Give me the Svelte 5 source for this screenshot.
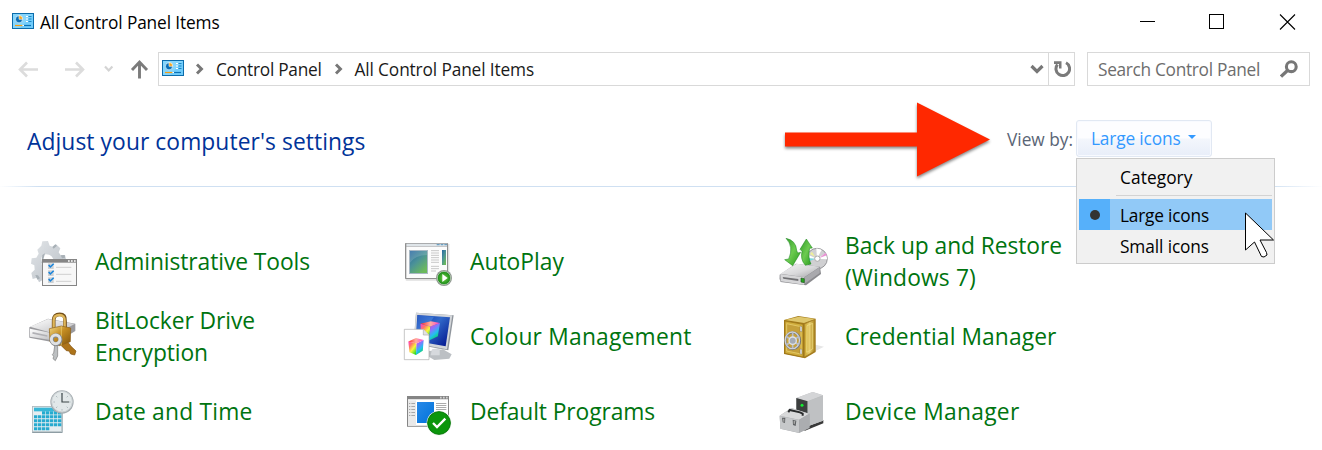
<script>
  const items = [
    { icon: 'tools', lines: [['Administrative Tools', 215]] },
    { icon: 'autoplay', lines: [['AutoPlay', 94]] },
    { icon: 'backup', lines: [['Back up and Restore', 217], ['(Windows 7)', 131]] },
    { icon: 'bitlocker', lines: [['BitLocker Drive', 160], ['Encryption', 113]] },
    { icon: 'colour', lines: [['Colour Management', 221.5]] },
    { icon: 'credential', lines: [['Credential Manager', 211.5]] },
    { icon: 'date', lines: [['Date and Time', 157.5]] },
    { icon: 'programs', lines: [['Default Programs', 185]] },
    { icon: 'device', lines: [['Device Manager', 174.5]] }
  ];

  // Spreads the letters so that a label takes up the given width.
  function fit(node, width) {
    const spacing = (width - node.getBoundingClientRect().width) / node.textContent.length;
    node.style.letterSpacing = `${spacing.toFixed(3)}px`;
  }
</script>

{#snippet panelIcon()}
  <svg class="panel-icon" viewBox="0 0 22 16">
    <rect width="22" height="16" fill="#0c6cab" />
    <rect x="1" y="1" width="20" height="14" fill="#70ccfb" />
    <path d="M1 1h20L8 15H1z" fill="#86d5fb" />
    <circle cx="7" cy="6.3" r="3.6" fill="#0a6fb7" stroke="#e5f6ff" stroke-width=".7" />
    <path d="M7 6.3V2.5a3.8 3.8 0 0 1 3.8 3.8z" fill="#f7a51c" stroke="#fff" stroke-width=".6" />
    <path d="M14 3.5h2m-2 2.500h2m-2 2.500h2" stroke="#fff" stroke-width="1.200" />
    <path d="M16.500 3.500h3m-3 2.500h3m-3 2.500h3" stroke="#1c86c6" stroke-width="1.100" />
    <path d="M3 12.500h7.500" stroke="#f59d12" stroke-width="1.200" />
    <path d="M10.500 12.500h1.500" stroke="#fff" stroke-width="1.200" />
    <path d="M12 12.500h7" stroke="#0c72b5" stroke-width="1.200" />
  </svg>
{/snippet}

{#snippet chevron()}
  <svg class="chevron" viewBox="0 0 10 12"><path d="M2 1.500 6.500 6 2 10.500" fill="none" stroke="#777" stroke-width="2.900" /></svg>
{/snippet}

<main>
  <header class="titlebar">
    {@render panelIcon()}
    <span class="title" use:fit={179.5}>All Control Panel Items</span>
    <svg class="controls" viewBox="0 0 156 16" shape-rendering="crispEdges">
      <path d="M0 7.500h15M69.500.500h14v14h-14z" fill="none" stroke="#000" />
      <path d="m140 .500 15 15m0-15-15 15" fill="none" stroke="#000" shape-rendering="auto" stroke-width="1.100" />
    </svg>
  </header>

  <nav>
    <svg class="arrows" viewBox="0 0 158 34" fill="none">
      <path d="M38 17.500H21M27 10.500l-7 7 7 7M65 17.500h17M76 10.500l7 7-7 7" stroke="#dcdcdc" stroke-width="2.600" />
      <path d="m105 14.500 3.700 4 3.700-4" stroke="#d4d4d4" stroke-width="2.200" />
      <path d="M139.500 26.500V10M132 18l7.500-8 7.500 8" stroke="#7b7b7b" stroke-width="2.900" />
    </svg>
    <div class="address">
      {@render panelIcon()}
      {@render chevron()}
      <span class="crumb" use:fit={105.5}>Control Panel</span>
      {@render chevron()}
      <span class="crumb" use:fit={179.5}>All Control Panel Items</span>
      <svg class="expand" viewBox="0 0 14 10"><path d="m1.500 2 5.500 5.500L12.500 2" fill="none" stroke="#777" stroke-width="3.200" /></svg>
      <div class="refresh">
        <svg viewBox="0 0 18 18"><path d="M13 2.800A6.800 6.800 0 1 1 4.500 4.500" fill="none" stroke="#7a7a7a" stroke-width="3" /><path d="M1 1.200h7.500v7.300H6V4H1z" fill="#7a7a7a" /></svg>
      </div>
    </div>
    <div class="search">
      <span use:fit={162}>Search Control Panel</span>
      <svg viewBox="0 0 18 18" fill="none" stroke="#777"><circle cx="11.300" cy="6.700" r="4.900" stroke-width="3.100" /><path d="m7.500 10.500-6.500 6" stroke-width="3.300" /></svg>
    </div>
  </nav>

  <section class="heading">
    <h1><span use:fit={338.5}>Adjust your computer's settings</span></h1>
    <svg class="pointer" viewBox="0 0 220 92"><path d="M4 39.500h132V9.500l73 37-73 37v-30H4z" fill="#ff2800" /></svg>
    <div class="view-label"><span use:fit={66}>View by:</span></div>
    <div class="view">
      <button><span use:fit={89.5}>Large icons</span><i></i></button>
      <div class="menu">
        <div class="option"><span use:fit={72.5}>Category</span></div>
        <hr />
        <div class="option selected"><b></b><span use:fit={89}>Large icons</span></div>
        <div class="option"><span use:fit={89}>Small icons</span></div>
        <svg class="cursor" viewBox="0 0 30 46"><path d="M.5 1v37l9-8 7 14.500 2.500.500 3-2-.500-2.500L15 28h13.500z" fill="#fff" stroke="#000" /></svg>
      </div>
    </div>
  </section>

  <section class="grid">
    {#each items as item}
      <div class="item">
        <svg class="icon" viewBox="0 0 210 210">
          {#if item.icon === 'tools'}
            <defs><linearGradient id="gear" x2="1" y2="1"><stop stop-color="#e2e5e8" /><stop offset="1" stop-color="#b6bdc4" /></linearGradient></defs>
            <path fill-rule="evenodd" d="m64 47 3-13 17-1 5 14 9 3 10-7 13 12-5 12 6 9 13-1 4 18-13 8-2 12-67 44-6-14-13 4-4-18 10-10-1-13-10-5 2-16 14-2 7-12-4-12zM78 73q-16 3-15 21 1 17 16 18 18 0 22-15 0-23-23-24z" fill="url(#gear)" />
            <path d="m67 75 8-5-6 22 2 15-7-8zM97 51l9-8 5 4-10 9zM122 76l12-1 1 8-9 2zM46 135l8 1 6 9-8 4z" fill="#a8b0b6" />
            <rect x="66" y="87" width="105" height="81" fill="#858585" /><rect x="69" y="98" width="99" height="67" fill="#f7f7f7" />
            <path d="M144 93h5m4 0h5m4 0h5" stroke="#fff" stroke-width="5" />
            <path d="M108 112h46M108 133h46M108 154h46" stroke="#bbb" stroke-width="2" />
            {#each [99, 120, 141] as y}<rect x="84" y={y + 1} width="17" height="17" fill="#ccd0d3" /><path d="m86 {y + 6} 5 6 10-10" fill="none" stroke="#1683dc" stroke-width="4.500" />{/each}
          {:else if item.icon === 'autoplay'}
            <defs><linearGradient id="screen" x2=".7" y2="1"><stop stop-color="#2767a0" /><stop offset=".5" stop-color="#4b9298" /><stop offset="1" stop-color="#6cba5b" /></linearGradient><radialGradient id="play"><stop stop-color="#73d546" /><stop offset="1" stop-color="#168717" /></radialGradient></defs>
            <rect x="32" y="41" width="131" height="111" rx="2" fill="#ccc" opacity=".6" /><rect x="30" y="39" width="129" height="108" rx="2" fill="#909090" />
            <rect x="34" y="41" width="122" height="8" fill="#dfe5e9" /><path d="M125 44h9m3 0h8m3 0h8" stroke="#6ca0c2" stroke-width="4" />
            <rect x="34" y="50" width="122" height="94" fill="#fcfcfc" /><rect x="42" y="60" width="57" height="72" fill="#a8b8c4" /><rect x="45" y="63" width="51" height="66" fill="url(#screen)" />
            <path d="M45 63h51v12Q61 75 45 98z" fill="#fff" opacity=".15" /><rect x="141" y="60" width="12" height="45" fill="url(#screen)" />
            <path d="M108 62h24m-24 7h24m-24 7h24m-24 7h24m-24 7h24m-24 7h24m-24 12h24m-24 7h24m-24 7h15" stroke="#c8c8c8" stroke-width="3" />
            <circle cx="147" cy="144" r="24" fill="#8f9790" /><circle cx="147" cy="144" r="20" fill="url(#play)" stroke="#d2ddcd" stroke-width="2" /><path d="m142 132 16 12-16 12z" fill="#fff" />
          {:else if item.icon === 'backup'}
            <defs><linearGradient id="drive" x2="1" y2="1"><stop stop-color="#f7f7f8" /><stop offset=".55" stop-color="#d8d8da" /><stop offset="1" stop-color="#a0a0a4" /></linearGradient><linearGradient id="green" x2="1" y2="1"><stop stop-color="#2f9a25" /><stop offset=".5" stop-color="#6ccb50" /><stop offset="1" stop-color="#26981c" /></linearGradient></defs>
            <circle cx="141" cy="86" r="31" fill="#d0d0d2" stroke="#858589" stroke-width="2.500" /><path d="m141 86 26-16 5 18zM141 86l-24-10-6 10zM141 86l-2-31 16 4z" fill="#fff" /><path d="m148 84 19-16 4 8z" fill="#e993d4" /><path d="m135 86-22-2 2 11z" fill="#78d9dd" /><path d="m135 80-15-8 6-7z" fill="#eff099" /><circle cx="142" cy="86" r="8" fill="#fff" stroke="#aaa" stroke-width="3" />
            <path d="m29 134 49-33 72 9 3 22-45 34-76-10q-5-9-3-22z" fill="#8a8a8e" /><path d="m31 131 49-30 70 9-47 32z" fill="url(#drive)" /><path d="m31 132 71 10v22l-70-10z" fill="#d6d6d8" /><path d="m102 143 47-31v17l-43 31-4 4z" fill="#a9a9ad" /><path d="m38 141 47 6v6l-45-7z" fill="#717174" /><path d="m93 144 10 2v12l-10-2z" fill="#25a51d" stroke="#265525" stroke-width="2" />
            <path d="M48 25q30 6 32 36l3 8 9-2-24 40-24-18 12-2q16-37-8-62z" fill="url(#green)" stroke="#16831a" stroke-width="1.500" /><path d="m90 58 19-31 18 27-8 1q-6 28 4 47l-17 4Q90 88 96 64z" fill="url(#green)" stroke="#16831a" stroke-width="1.500" />
          {:else if item.icon === 'bitlocker'}
            <defs><linearGradient id="disk" x2="1" y2="1"><stop stop-color="#fff" /><stop offset="1" stop-color="#b9b9bc" /></linearGradient><linearGradient id="gold" x2="1" y2="1"><stop stop-color="#f2d988" /><stop offset=".45" stop-color="#c48d22" /><stop offset="1" stop-color="#81540c" /></linearGradient></defs>
            <path d="m28 67 56-26 82 15v22l-58 35-80-15z" fill="#9a9a9e" /><path d="m30 65 54-23 80 15-57 30z" fill="url(#disk)" /><path d="m30 71 75 15v21l-75-12z" fill="url(#disk)" /><path d="m38 81 44 10v4l-45-9z" fill="#b0b0b4" />
            <path d="m124 112 14-8 15 20 15 14-4 12-12-3-5-9-8-1-15-15z" fill="#ad741a" stroke="#805214" stroke-width="2" />
            <path d="M101 68V46q0-18 18-18t16 20v20" fill="none" stroke="#74501a" stroke-width="11" /><path d="M101 68V46q0-16 17-16t16 18v20" fill="none" stroke="#deb65a" stroke-width="7" />
            <path d="m88 71 36-8 28 6-1 41-33 12-28-12z" fill="url(#gold)" stroke="#8d611a" stroke-width="2" /><path d="M124 64v57" stroke="#f0d473" stroke-width="2" />
            <path d="m105 116 8 4v33l-7 14-7-6 2-7-4-5 4-5z" fill="#bdc0c2" stroke="#7b7b7c" stroke-width="2" /><circle cx="108" cy="104" r="13" fill="none" stroke="#85888b" stroke-width="13" /><circle cx="107" cy="103" r="13" fill="none" stroke="#dfe1e3" stroke-width="9" />
          {:else if item.icon === 'colour'}
            <defs><linearGradient id="monitor" x2="1" y2=".8"><stop stop-color="#032fa9" /><stop offset=".5" stop-color="#3169c9" /><stop offset="1" stop-color="#071d94" /></linearGradient><linearGradient id="rainL" x2=".8" y2="1"><stop stop-color="#ff3ad8" /><stop offset=".3" stop-color="#ff7468" /><stop offset=".6" stop-color="#f8f73d" /><stop offset="1" stop-color="#24d924" /></linearGradient><linearGradient id="rainR" x2=".5" y2="1"><stop stop-color="#f93abe" /><stop offset=".4" stop-color="#8775ff" /><stop offset=".7" stop-color="#21c1ef" /><stop offset="1" stop-color="#0dd25a" /></linearGradient><linearGradient id="rainT" x2="1"><stop stop-color="#ff2422" /><stop offset=".5" stop-color="#ffb09f" /><stop offset="1" stop-color="#ff3bca" /></linearGradient></defs>
            <path d="m96 139 48-6 26 15-7 13-45 4-24-14z" fill="#bcc0c4" /><path d="m111 133 23-4v22h-27z" fill="#d6d9dd" />
            <path d="m63 23 113 8-16 105-104-19z" fill="#8f959c" /><path d="m63 23 109 8-16 102-101-18z" fill="#d3d6da" /><path d="m67 30 98 7-13 87-90-16z" fill="url(#monitor)" /><path d="m68 31 49 4-29 45-24-5z" fill="#7bbcff" opacity=".3" />
            <g transform="translate(77 47) rotate(3)"><path d="m0 9 30 7-2 42L3 43z" fill="url(#rainL)" /><path d="m30 16 28-12-4 40-26 14z" fill="url(#rainR)" /><path d="m0 9 31-9 27 4-28 12z" fill="url(#rainT)" /></g>
            <path d="M28 73h57l17 18v73H28z" fill="#fff" stroke="#aaa" stroke-width="2" /><path d="M85 73v17h17" fill="#e1e1e1" stroke="#aaa" stroke-width="2" />
            <g transform="translate(40 99) scale(.85)"><path d="m0 12 29 7-2 41L4 50z" fill="url(#rainL)" /><path d="m29 19 25-12-3 38-24 15z" fill="url(#rainR)" /><path d="M0 12 27 0l27 7-25 12z" fill="url(#rainT)" /></g>
          {:else if item.icon === 'credential'}
            <defs><linearGradient id="safe"><stop stop-color="#c9a42e" /><stop offset=".5" stop-color="#e8cf70" /><stop offset="1" stop-color="#ab841c" /></linearGradient></defs>
            <path d="m137 119 25 6-24 12-33 20z" fill="#e6e6e6" /><path d="m42 45 43-12 52 8v100l-32 19-63-13z" fill="#a47b1a" /><path d="m45 45 41-10 49 7-33 12z" fill="#dfc76c" /><path d="m45 48 54 10v98l-54-11z" fill="#d1ad3c" stroke="#9a7317" stroke-width="2" /><path d="m103 57 31-13v94l-31 18z" fill="url(#safe)" stroke="#a8822a" stroke-width="2" /><path d="m111 62 17-7v77l-18 10z" fill="none" stroke="#f4e28a" stroke-width="2" /><path d="m50 56 43 9v82l-43-9z" fill="#c5a03a" stroke="#e2c765" stroke-width="3" /><path d="m90 63 6 2v15l-6-1zM90 132l6 1v15l-6-1z" fill="#dedede" stroke="#766a43" />
            <ellipse cx="68" cy="107" rx="22" ry="25" fill="none" stroke="#74767a" stroke-width="7" /><ellipse cx="67" cy="106" rx="21.500" ry="25" fill="none" stroke="#ced1d8" stroke-width="4" /><path d="M68 83v47M49 94l38 26M49 120l38-26" stroke="#b9bdc5" stroke-width="5" /><circle cx="68" cy="107" r="11" fill="#a4abb6" stroke="#dfe2e7" stroke-width="4" />
          {:else if item.icon === 'date'}
            <rect x="36" y="78" width="92" height="81" rx="2" fill="#8e9da4" /><rect x="38" y="80" width="87" height="75" fill="#e5edf0" stroke="#bcc6ca" stroke-width="2" /><path d="M42 83h82v11H42z" fill="#39b7d6" /><path d="M66 98.500h59" stroke="#23acd0" stroke-width="10" stroke-dasharray="10 2" /><path d="M42 110.500h82M42 122.500h82M42 134.500h82M42 146.500h46" stroke="#27aacf" stroke-width="9" stroke-dasharray="10 2" />
            <circle cx="126" cy="66" r="35" fill="#a5adb1" /><circle cx="126" cy="65" r="31" fill="#e2e8e9" stroke="#cbd1d4" stroke-width="3" /><path d="M126 39v5M126 87v5M100 66h5M147 66h5m-44-18 4 4m28 28 4 4m0-36-4 4m-28 28-4 4" stroke="#9ba8ad" stroke-width="2" /><path d="M126 39v27h21" fill="none" stroke="#3c4649" stroke-width="3.500" />
          {:else if item.icon === 'programs'}
            <path d="M36 48h126v92H36z" fill="#858585" /><path d="M39 58h120v79H39z" fill="#fff" /><path d="M39 61h24v76H39z" fill="#e9e9e9" /><path d="M135 53h5m4 0h5m4 0h5" stroke="#cfcfcf" stroke-width="5" /><defs><linearGradient id="blue" x2="1" y2="1"><stop stop-color="#2889e8" /><stop offset="1" stop-color="#0073db" /></linearGradient></defs><path d="M66 66h51v63H66z" fill="url(#blue)" />
            <path d="M42 70.500h4m3 0h11m-18 9h4m3 0h11m-18 9h4m3 0h11m-18 9h4m3 0h11m-18 9h4m3 0h11M123 70.500h31m-31 6h31m-31 6h31m-31 6h31" stroke="#9a9a9a" stroke-width="2.500" /><circle cx="132" cy="129" r="37" fill="#e1ebe1" /><circle cx="132" cy="129" r="34" fill="#0b960c" stroke="#087c0a" stroke-width="3" /><path d="m114 129 12 12 25-25" fill="none" stroke="#fff" stroke-width="7" />
          {:else}
            <path d="m94 146 66-26v10l-55 22z" fill="#393939" /><path d="m79 54 49-18 31 10v76l-46 17-34-13z" fill="#b9bbbd" /><path d="m79 54 49-18 31 10-46 18z" fill="#d4d5d7" /><path d="m79 54 34 10v75l-34-13z" fill="#3c3f3f" /><path d="m113 64 46-17v75l-46 17z" fill="#bfc1c3" /><circle cx="96" cy="76" r="4.500" fill="#12ee30" />
            <path d="m29 107 35-23 55 17v43l-32 15-56-13z" fill="#a6a8ab" /><path d="m29 107 35-22 53 16-30 18z" fill="#d8d9da" /><path d="m29 108 58 12v38l-56-12z" fill="#c6c8ca" /><path d="m88 120 29-18v41l-29 15z" fill="#abadb0" /><path d="m55 97 4-7 31 7 8 4v6" fill="none" stroke="#292b2c" stroke-width="6" /><path d="M36 113h10l-1 16-7-2zM68 119l11 3-2 16-8-3z" fill="#5f6264" /><path d="m39 116 4 1v9l-3-1zM71 122l5 1-2 10-3-2z" fill="#aaa" />
          {/if}
        </svg>
        <div class="name">{#each item.lines as line}<div><span use:fit={line[1]}>{line[0]}</span></div>{/each}</div>
      </div>
    {/each}
  </section>
</main>

<style>
  :global(body) { margin: 0; background: #fff; }
  main { width: 1322px; height: 450px; overflow: hidden; font-family: "Open Sans", "Noto Sans", sans-serif; font-size: 17.300px; color: #000; }
  span { white-space: nowrap; }
  svg { display: block; flex: none; }
  .panel-icon { width: 22px; height: 16px; }
  .titlebar { height: 44px; display: flex; align-items: center; padding-left: 12px; box-sizing: border-box; }
  .titlebar .panel-icon { margin-top: -3px; }
  .title { margin-left: 6px; padding-top: 1px; }
  .controls { width: 156px; height: 16px; margin-left: auto; margin-right: 26px; }
  nav { display: flex; height: 34px; margin-top: 8px; }
  .arrows { width: 158px; height: 34px; }
  .address, .search { box-sizing: border-box; height: 34px; border: 1px solid #d9d9d9; display: flex; align-items: center; }
  .address { width: 917px; padding-left: 3px; color: #1a1a1a; }
  .address .panel-icon { margin-top: -2px; }
  .chevron { width: 10px; height: 12px; margin-left: 11px; }
  .crumb { margin-left: 11px; padding-top: 1px; }
  .crumb + .chevron { margin-left: 12px; }
  .expand { width: 14px; height: 10px; margin-left: auto; margin-right: 4px; }
  .refresh { width: 25px; height: 32px; border-left: 1px solid #d9d9d9; display: flex; align-items: center; justify-content: center; }
  .refresh svg { width: 18px; height: 18px; margin-left: 1px; }
  .search { width: 223px; margin-left: 12px; padding: 0 11px 0 10px; justify-content: space-between; color: #6d6d6d; }
  .search span { padding-top: 1px; }
  .search svg { width: 18px; height: 18px; }
  .heading { height: 100px; display: flex; align-items: flex-start; border-bottom: 1px solid; border-image: linear-gradient(90deg, #fff, #cfe0f2 3%, #cfe0f2 96%, #fff) 1; }
  h1 { width: 338px; margin: 38px 0 0 27px; font-weight: 400; font-size: 22.800px; line-height: 36px; color: #003399; }
  .pointer { width: 220px; height: 92px; margin: 7px 0 0 416px; filter: drop-shadow(0 2px 1.500px #0007); }
  .view-label { width: 66px; margin: 42px 0 0 6px; line-height: 24px; color: #5a6575; }
  .view { position: relative; margin: 34px 0 0 3px; }
  button { display: flex; align-items: center; box-sizing: border-box; width: 136px; height: 37px; padding: 0 0 0 14px; border: 1px solid #e1e8f3; border-radius: 3px; background: linear-gradient(#fdfdff 0 48%, #f3f6fc 52%, #e8eef9); color: #3399ff; font: inherit; box-shadow: inset 0 0 0 1px #f8faff; }
  button i { border: 4px solid transparent; border-top: 4px solid #3399ff; border-bottom: 0; margin: -4px 0 0 7px; }
  .menu { position: absolute; left: 0; top: 38px; box-sizing: border-box; width: 199px; height: 106px; padding: 2px; border: 1px solid #ccc; background: #f1f1f1; z-index: 1; }
  .option { box-sizing: border-box; height: 31px; display: flex; align-items: center; padding: 2px 0 0 41px; }
  .menu hr { border: 0; border-top: 1px solid #d3d3d3; margin: 3px 0 3px 37px; }
  .selected { position: relative; background: linear-gradient(90deg, #56b0fa 31px, #91c9f7 31px); }
  .selected b { position: absolute; left: 11px; top: 11px; width: 10px; height: 10px; border-radius: 50%; background: #333; }
  .cursor { position: absolute; left: 168px; top: 53px; width: 30px; height: 46px; }
  .grid { display: grid; grid-template-columns: repeat(3, 375px); grid-auto-rows: 64px; row-gap: 11px; padding: 43px 0 0 20px; }
  .item { display: flex; align-items: center; }
  .icon { width: 70px; height: 70px; align-self: flex-start; }
  .name { margin-left: 5px; color: #00740f; font-size: 22.800px; line-height: 32px; }
</style>
